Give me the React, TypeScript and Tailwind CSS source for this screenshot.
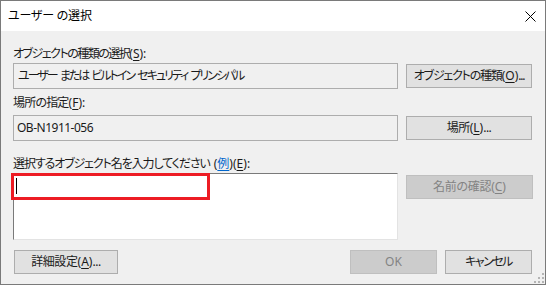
import React from "react";

const FONT = 'font-["Noto_Sans","Noto_Sans_CJK_JP",sans-serif] [font-feature-settings:"palt"] whitespace-nowrap';

function Key({ k }: { k: string }) {
  return (
    <span className="tracking-normal">
      (<span className="underline underline-offset-2">{k}</span>)
    </span>
  );
}

function Button({
  children,
  className = "",
  disabled = false,
}: {
  children: React.ReactNode;
  className?: string;
  disabled?: boolean;
}) {
  return (
    <div
      className={
        "flex h-[24px] shrink-0 items-center justify-center border text-[12px] leading-none whitespace-nowrap " +
        (disabled
          ? "border-[#bfbfbf] bg-[#cccccc] text-[#838383] "
          : "border-[#adadad] bg-[#e1e1e1] text-[#1a1a1a] ") +
        className
      }
    >
      {children}
    </div>
  );
}

function Grip() {
  const dots = [
    [8, 0],
    [4, 4],
    [8, 4],
    [0, 8],
    [4, 8],
    [8, 8],
  ];
  return (
    <svg width="10" height="10" className="absolute bottom-[1px] right-[1px]">
      {dots.map(([x, y], i) => (
        <rect key={i} x={x} y={y} width="2" height="2" fill="#b4b4b4" />
      ))}
    </svg>
  );
}

export default function App() {
  return (
    <div
      className={
        "relative flex h-[285px] w-[546px] flex-col border border-[#7a7a7a] bg-[#f0f0f0] text-[12px] text-[#1a1a1a] " +
        FONT
      }
    >
      {/* Title bar */}
      <div className="flex h-[30px] shrink-0 items-center justify-between bg-white pl-[7px] pr-[9px]">
        <span className="text-[12px] leading-none tracking-[-0.2px] text-black">ユーザー の選択</span>
        <svg width="11" height="11" viewBox="0 0 11 11">
          <path d="M0.5 0.5 L10.5 10.5 M10.5 0.5 L0.5 10.5" stroke="#000" strokeWidth="1" />
        </svg>
      </div>

      {/* Body */}
      <div className="flex flex-col pl-[12px] pr-[13px] pt-[15px]">
        <div className="h-[16px] leading-[16px] tracking-[-1.5px]">
          オブジェクトの種類の選択<Key k="S" />:
        </div>
        <div className="mt-[1px] flex h-[26px] items-center gap-[8px]">
          <div className="flex h-[26px] w-[385px] shrink-0 items-center border border-[#adadad] bg-[#f0f0f0] pl-[4px] tracking-[-2px] [word-spacing:2px]">
            ユーザー または ビルトイン セキュリティ プリンシパル
          </div>
          <Button className="w-[126px] tracking-[-1.2px]">
            オブジェクトの種類<Key k="O" />...
          </Button>
        </div>

        <div className="mt-[6px] h-[16px] leading-[16px] tracking-[-0.8px]">
          場所の指定<Key k="F" />:
        </div>
        <div className="mt-[4px] flex h-[26px] items-center gap-[8px]">
          <div className="flex h-[26px] w-[385px] shrink-0 items-center border border-[#adadad] bg-[#f0f0f0] pl-[3px] tracking-[-0.5px]">
            OB-N1911-056
          </div>
          <Button className="w-[126px] tracking-[-0.5px]">
            場所<Key k="L" />...
          </Button>
        </div>

        <div className="mt-[15px] h-[16px] leading-[16px] tracking-[-1.1px]">
          選択するオブジェクト名を入力してください
          <span className="ml-[4px] tracking-normal">
            (<span className="text-[#0066cc] underline underline-offset-2">例</span>)
          </span>
          <Key k="E" />:
        </div>
        <div className="mt-[1px] flex items-start gap-[8px]">
          <div className="relative h-[67px] w-[385px] shrink-0 border border-b-[#e3e3e3] border-l-[#7a7a7a] border-r-[#e3e3e3] border-t-[#7a7a7a] bg-white pl-[2px] pt-[4px]">
            <div className="h-[16px] w-px bg-black" />
            <div className="absolute left-[-3px] top-[-1px] h-[27px] w-[199px] border-[3px] border-[#ed1c24]" />
          </div>
          <Button disabled className="mt-[2px] w-[127px] tracking-[-0.3px]">
            名前の確認<Key k="C" />
          </Button>
        </div>

        <div className="mt-[10px] flex items-center">
          <Button className="ml-[1px] w-[104px] tracking-[-0.4px]">
            詳細設定<Key k="A" />...
          </Button>
          <div className="ml-auto flex gap-[8px]">
            <Button disabled className="w-[87px]">
              OK
            </Button>
            <Button className="w-[87px] tracking-[-1.5px]">キャンセル</Button>
          </div>
        </div>
      </div>
      <Grip />
    </div>
  );
}
